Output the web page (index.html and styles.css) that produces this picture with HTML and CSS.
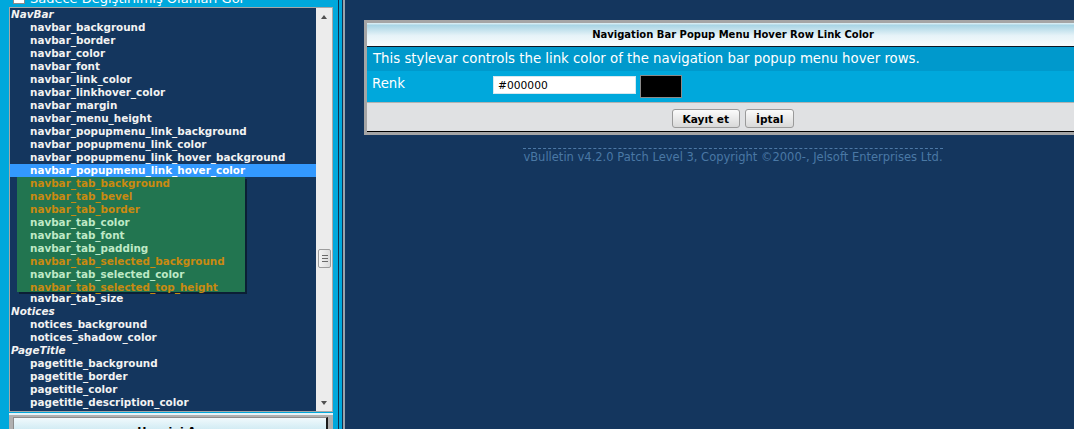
FILE: index.html
```html
<!DOCTYPE html>
<html>
<head>
  <meta charset="UTF-8">
  <title>StyleVar Düzenleyici</title>
  <link rel="stylesheet" href="styles.css">
</head>
<body>

<!-- sol çerçeve: stylevar listesi -->
<div class="left-frame">
  <div class="topbar">
    <label class="only-changed"><span class="check"></span> Sadece Değiştirilmiş Olanları Gör</label>
  </div>

  <div class="varlist">
    <div class="items">
      <div class="group">NavBar</div>
      <div class="item">navbar_background</div>
      <div class="item">navbar_border</div>
      <div class="item">navbar_color</div>
      <div class="item">navbar_font</div>
      <div class="item">navbar_link_color</div>
      <div class="item">navbar_linkhover_color</div>
      <div class="item">navbar_margin</div>
      <div class="item">navbar_menu_height</div>
      <div class="item">navbar_popupmenu_link_background</div>
      <div class="item">navbar_popupmenu_link_color</div>
      <div class="item">navbar_popupmenu_link_hover_background</div>
      <div class="item selected">navbar_popupmenu_link_hover_color</div>
      <div class="tab-group">
        <div class="item changed">navbar_tab_background</div>
        <div class="item changed">navbar_tab_bevel</div>
        <div class="item changed">navbar_tab_border</div>
        <div class="item light">navbar_tab_color</div>
        <div class="item light">navbar_tab_font</div>
        <div class="item light">navbar_tab_padding</div>
        <div class="item changed">navbar_tab_selected_background</div>
        <div class="item light">navbar_tab_selected_color</div>
        <div class="item changed">navbar_tab_selected_top_height</div>
      </div>
      <div class="item">navbar_tab_size</div>
      <div class="group">Notices</div>
      <div class="item">notices_background</div>
      <div class="item">notices_shadow_color</div>
      <div class="group">PageTitle</div>
      <div class="item">pagetitle_background</div>
      <div class="item">pagetitle_border</div>
      <div class="item">pagetitle_color</div>
      <div class="item">pagetitle_description_color</div>
      <div class="item">pagetitle_font</div>
    </div>
    <div class="scrollbar">
      <div class="arrow up"></div>
      <div class="track"><div class="thumb"><i></i><i></i><i></i></div></div>
      <div class="arrow down"></div>
    </div>
  </div>

  <div class="list-foot">
    <button class="foot-btn">Hepsini Aç</button>
  </div>
</div>

<div class="divider"></div>

<!-- sağ çerçeve: düzenleme formu -->
<div class="right-frame">
  <div class="tborder">
    <div class="tcat">Navigation Bar Popup Menu Hover Row Link Color</div>
    <div class="desc-row">This stylevar controls the link color of the navigation bar popup menu hover rows.</div>
    <div class="field-row">
      <div class="field-label">Renk</div>
      <input class="color-input" type="text" value="#000000">
      <div class="swatch"></div>
    </div>
    <div class="submit-row">
      <button class="btn">Kayıt et</button>
      <button class="btn">İptal</button>
    </div>
  </div>

  <div class="footer">
    <span>vBulletin v4.2.0 Patch Level 3, Copyright ©2000-, Jelsoft Enterprises Ltd.</span>
  </div>
</div>

</body>
</html>
```

FILE: styles.css
```css
body {
  margin: 0;
  display: flex;
  height: 429px;
  overflow: hidden;
  background: #14365e;
  font-family: "DejaVu Sans", Verdana, sans-serif;
}

.left-frame {
  width: 338px;
  flex: none;
  background: #00a8dc;
}
.divider {
  width: 3px;
  flex: none;
  background: #00a8dc;
  border-left: 1px solid #10304f;
  border-right: 1px solid #10304f;
}
.right-frame {
  flex: 1;
  border-left: 2px solid #9aa3ab;
  padding: 20px 0 0 19px;
}

/* üst onay kutusu */
.topbar {
  height: 7px;
  overflow: hidden;
}
.only-changed {
  display: flex;
  align-items: center;
  height: 16px;
  margin: -10px 0 0 13px;
  color: #fff;
  font-size: 13px;
}
.check {
  width: 10px;
  height: 10px;
  margin-right: 5px;
  background: #fff;
  border: 1px solid #8a8a8a;
}

/* liste */
.varlist {
  display: flex;
  height: 403px;
  margin: 0 5px 0 9px;
  border: 1px solid #a7a7a7;
  background: #14365e;
  overflow: hidden;
}
.items {
  flex: 1;
  font-size: 10.4px;
  font-weight: bold;
  line-height: 13px;
  color: #f2f2f2;
  white-space: nowrap;
}
.group {
  padding-left: 1px;
  font-style: italic;
}
.item {
  padding-left: 20px;
}
.item.selected {
  background: #3399ff;
  color: #fff;
}
.tab-group {
  width: 228px;
  height: 115px;
  margin-left: 7px;
  background: #227550;
  box-shadow: 2px 2px 0 #0b1f35;
}
.tab-group .item {
  padding-left: 13px;
}
.item.changed {
  color: #c98a10;
}
.item.light {
  color: #bfe9c6;
}

.scrollbar {
  width: 16px;
  display: flex;
  flex-direction: column;
  background: #ececec;
}
.arrow {
  height: 17px;
  display: flex;
  align-items: center;
  justify-content: center;
}
.arrow::before {
  content: "";
  border-left: 3px solid transparent;
  border-right: 3px solid transparent;
}
.arrow.up::before {
  border-bottom: 4px solid #505050;
}
.arrow.down::before {
  border-top: 4px solid #505050;
}
.track {
  flex: 1;
}
.thumb {
  width: 11px;
  height: 17px;
  margin: 224px 0 0 2px;
  border: 1px solid #9c9c9c;
  border-radius: 2px;
  background: linear-gradient(to right, #f4f4f4, #dcdcdc);
  display: flex;
  flex-direction: column;
  align-items: center;
  justify-content: center;
  gap: 2px;
}
.thumb i {
  width: 6px;
  height: 1px;
  background: #6a6a6a;
}

.list-foot {
  margin: 1px 5px 0 9px;
  border-top: 2px solid #e6f3f7;
  background: #b0b0b0;
  padding: 2px 5px 0 4px;
}
.foot-btn {
  display: block;
  width: 100%;
  height: 24px;
  border: 1px solid #8c8c8c;
  border-right: 2px solid #1a1a1a;
  background: linear-gradient(#f0f9fc, #b6dfec);
  font-family: "DejaVu Sans", Verdana, sans-serif;
  font-size: 11px;
  font-weight: bold;
  padding-top: 6px;
}

/* form tablosu */
.tborder {
  width: 732px;
  border: 3px solid #a5a5a5;
}
.tcat {
  height: 23px;
  line-height: 23px;
  border-bottom: 1px solid #0a1624;
  background: linear-gradient(#e3f2f7 0, #a9d5e5 10%, #e6f3f8 55%, #f7fbfc 100%);
  text-align: center;
  font-size: 10px;
  font-weight: bold;
  color: #000;
}
.desc-row {
  height: 24px;
  line-height: 24px;
  padding-left: 6px;
  background: #0099cc;
  color: #fff;
  font-size: 13.3px;
}
.field-row {
  display: flex;
  align-items: flex-start;
  height: 26px;
  padding-top: 5px;
  background: #00a8dc;
  border-bottom: 1px solid #b2b2b2;
}
.field-label {
  width: 121px;
  padding-left: 5px;
  color: #fff;
  font-size: 13.3px;
  line-height: 15px;
}
.color-input {
  width: 133px;
  height: 16px;
  margin: 0;
  padding: 0 4px;
  border: 1px solid #d6e8ef;
  font-family: "DejaVu Sans", Verdana, sans-serif;
  font-size: 10.7px;
  color: #000;
}
.swatch {
  width: 40px;
  height: 21px;
  margin: -1px 0 0 4px;
  background: #000;
  border: 1px solid #8a8a8a;
}
.submit-row {
  height: 29px;
  display: flex;
  justify-content: center;
  align-items: flex-start;
  gap: 5px;
  padding-top: 6px;
  box-sizing: border-box;
  background: #e0e1e3;
  border-bottom: 1px solid #000;
}
.btn {
  height: 19px;
  padding: 0 10px;
  border: 1px solid #9a9a9a;
  border-radius: 3px;
  background: linear-gradient(#fbfbfb, #d9d9d9);
  font-family: "DejaVu Sans", Verdana, sans-serif;
  font-size: 10.6px;
  font-weight: bold;
  color: #000;
}

.footer {
  width: 738px;
  margin-top: 11px;
  text-align: center;
}
.footer span {
  display: inline-block;
  border-top: 1px dashed #4d79a6;
  padding-top: 2px;
  font-size: 11.5px;
  line-height: 13px;
  color: #4a78a5;
}
```
